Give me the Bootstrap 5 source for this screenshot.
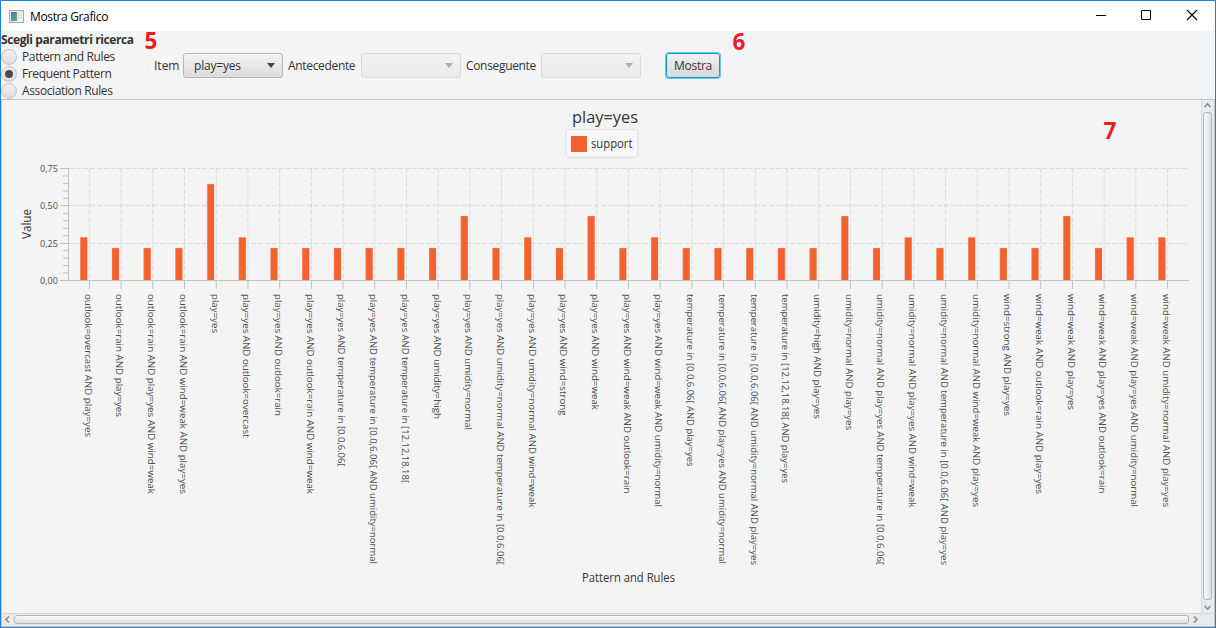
<!DOCTYPE html>
<html lang="it">
<head>
<meta charset="utf-8">
<title>Mostra Grafico</title>
<link rel="stylesheet" href="https://cdn.jsdelivr.net/npm/bootstrap@5.3.0/dist/css/bootstrap.min.css">
<script src="https://cdn.jsdelivr.net/npm/bootstrap@5.3.0/dist/js/bootstrap.bundle.min.js"></script>
<style>
body{font-family:"Open Sans","Noto Sans",sans-serif;font-size:12px;line-height:17px;color:#333;background:#f4f4f4}
.win{width:1216px;height:628px;border:1px solid #1a82d8;background:#f4f4f4}
.titlebar{height:30px;background:#fff;color:#000;padding-left:8px}
.titlebar .cap{letter-spacing:-.36px;margin-left:6px}
.winbtns{margin-right:5px}
.winbtns svg{display:block}
.params{height:68px}
.choices{width:153px}
.choices h1{font-size:12px;line-height:17px;font-weight:700;letter-spacing:-.4px}
.choice{height:17px;gap:5px;letter-spacing:-.38px}
.dot{width:16px;height:16px;border:1px solid #c3c3c3;border-radius:50%;background:linear-gradient(#f0f0f0,#dedede);flex:none}
.dot.sel::after{content:"";width:8px;height:8px;border-radius:50%;background:#4b4b4b}
.combo{width:100px;height:25px;flex:none;border:1px solid #b5b5b5;border-radius:3px;background:linear-gradient(#f3f3f3,#dcdcdc);padding:0 7px 0 10px;margin:0 5px;color:#333}
.combo span{letter-spacing:-.2px}
.combo.off{opacity:.4}
.combo i{border:4.5px solid transparent;border-top:5px solid #444;border-bottom:0}
.lbl1,.lbl2{letter-spacing:-.33px;white-space:nowrap}
.lbl1{width:68px}
.lbl2{width:70px}
.go{width:54px;height:25px;margin-left:20px;padding:0;font-size:12px;line-height:17px;letter-spacing:-.3px;color:#333;border:1px solid #039ed3;border-radius:3px;background:linear-gradient(#f0f0f0,#d9d9d9);box-shadow:0 0 0 1px #6cc4e6}
.note{position:absolute;font-weight:700;font-size:22.5px;line-height:22px;color:#ed1c24}
.pane{border:1px solid #c5c5c5;height:528px}
.plot{width:1199px;height:513px;display:block}
.vbar{width:13px;height:513px;background:#eaeaea;border-left:1px solid #d6d6d6;padding:1px 2px 1px 1px}
.hbar{height:13px;background:#eaeaea;border-top:1px solid #d6d6d6;padding:1px 14px 2px 1px}
.thumb{border:1px solid #b4b4b4;border-radius:3px}
.vbar .thumb{width:9px;margin:2px 0 3px;background:linear-gradient(90deg,#fafafa,#dedede)}
.hbar .thumb{height:9px;margin:0 2px;background:linear-gradient(#fafafa,#dedede)}
.arrow{fill:none;stroke:#8c8c8c;stroke-width:1.6}
</style>
</head>
<body>
<main class="win position-relative overflow-hidden">
  <header class="titlebar d-flex align-items-center">
    <svg width="15" height="13" viewBox="0 0 15 13"><defs><linearGradient id="ic" x2="1" y2="1"><stop stop-color="#4a78a8"/><stop offset="1" stop-color="#62ad7d"/></linearGradient></defs><rect x=".5" y=".5" width="14" height="12" fill="#f0f0f0" stroke="#a8a8a8"/><rect x="2" y="2" width="6" height="9" fill="url(#ic)"/><rect x="9" y="2" width="2" height="7" fill="#d8dde2"/><rect x="12" y="2" width="1" height="7" fill="#d8dde2"/></svg>
    <span class="cap">Mostra Grafico</span>
    <div class="winbtns d-flex ms-auto">
      <svg width="46" height="30"><path d="M12 14.500h10" stroke="#000"/></svg>
      <svg width="46" height="30"><path d="M11.500 9.500h9v9h-9z" fill="none" stroke="#000"/></svg>
      <svg width="34" height="30"><path d="M11 9l10 10M21 9L11 19" fill="none" stroke="#000" stroke-width="1.1"/></svg>
    </div>
  </header>

  <section class="params d-flex">
    <div class="choices">
      <h1 class="m-0 text-nowrap">Scegli parametri ricerca</h1>
      <div class="choice d-flex align-items-center"><span class="dot"></span>Pattern and Rules</div>
      <div class="choice d-flex align-items-center"><span class="dot sel d-flex align-items-center justify-content-center"></span>Frequent Pattern</div>
      <div class="choice d-flex align-items-center"><span class="dot"></span>Association Rules</div>
    </div>
    <div class="d-flex align-items-center">
      <span style="width:24px">Item</span>
      <div class="combo d-flex align-items-center justify-content-between"><span>play=yes</span><i></i></div>
      <span class="lbl1">Antecedente</span>
      <div class="combo off d-flex align-items-center justify-content-end"><i></i></div>
      <span class="lbl2">Conseguente</span>
      <div class="combo off d-flex align-items-center justify-content-end"><i></i></div>
      <button class="btn go">Mostra</button>
    </div>
  </section>

  <section class="pane">
    <div class="d-flex">
      <svg class="plot" id="plot" viewBox="2 100 1199 513"></svg>
      <div class="vbar d-flex flex-column align-items-center">
        <svg width="9" height="9"><path class="arrow" d="M1.500 6l3-3 3 3"/></svg>
        <div class="thumb flex-fill"></div>
        <svg width="9" height="9"><path class="arrow" d="M1.500 3l3 3 3-3"/></svg>
      </div>
    </div>
    <div class="hbar d-flex align-items-center">
      <svg width="9" height="9"><path class="arrow" d="M6 1.500l-3 3 3 3"/></svg>
      <div class="thumb flex-fill"></div>
      <svg width="9" height="9"><path class="arrow" d="M3 1.500l3 3-3 3"/></svg>
    </div>
  </section>

  <span class="note" style="left:143.500px;top:29px">5</span>
  <span class="note" style="left:731.500px;top:30px">6</span>
  <span class="note" style="left:1102.500px;top:119px">7</span>
</main>
<script>
// label, support in fourteenths, label length in px
const T='temperature in [0.0,6.06[', H='temperature in [12.12,18.18[';
const rows=[
['outlook=overcast AND play=yes',4,143],['outlook=rain AND play=yes',3,123],['outlook=rain AND play=yes AND wind=weak',3,200],
['outlook=rain AND wind=weak AND play=yes',3,200],['play=yes',9,39],['play=yes AND outlook=overcast',4,143.5],
['play=yes AND outlook=rain',3,122],['play=yes AND outlook=rain AND wind=weak',3,200],['play=yes AND '+T,3,172.5],
['play=yes AND '+T+' AND umidity=normal',3,270],['play=yes AND '+H,3,189],['play=yes AND umidity=high',3,125],
['play=yes AND umidity=normal',6,136],['play=yes AND umidity=normal AND '+T,3,271],['play=yes AND umidity=normal AND wind=weak',4,213.5],
['play=yes AND wind=strong',3,121.5],['play=yes AND wind=weak',6,116],['play=yes AND wind=weak AND outlook=rain',3,199.5],
['play=yes AND wind=weak AND umidity=normal',4,213],[T+' AND play=yes',3,172.5],[T+' AND play=yes AND umidity=normal',3,270],
[T+' AND umidity=normal AND play=yes',3,271],[H+' AND play=yes',3,189],['umidity=high AND play=yes',3,125],
['umidity=normal AND play=yes',6,136],['umidity=normal AND play=yes AND '+T,3,271],['umidity=normal AND play=yes AND wind=weak',4,213.5],
['umidity=normal AND '+T+' AND play=yes',3,271],['umidity=normal AND wind=weak AND play=yes',4,213],['wind=strong AND play=yes',3,122],
['wind=weak AND outlook=rain AND play=yes',3,200],['wind=weak AND play=yes',6,116],['wind=weak AND play=yes AND outlook=rain',3,199.5],
['wind=weak AND play=yes AND umidity=normal',4,213],['wind=weak AND umidity=normal AND play=yes',4,213]];
const text=(x,y,s,len,size,fill,extra='')=>`<text x="${x}" y="${y}" font-size="${size}" fill="${fill}" textLength="${len}" lengthAdjust="spacingAndGlyphs" ${extra}>${s}</text>`;
const y0=280.5, scale=149.3, step=31.71, x0=89.4;
let grid='',bars='',ticks='',labels='';
[.25,.5,.75].forEach(v=>grid+=`<path d="M69 ${Math.floor(y0-v*scale)+.5}H1189"/>`);
for(let i=0;i<=15;i++){const y=y0-i*scale*.05,major=i%5==0;ticks+=`<path d="M${major?60:63} ${major?Math.floor(y)+.5:y}H68"/>`}
['0,00','0,25','0,50','0,75'].forEach((s,i)=>labels+=text(40,[284,247,209,172][i],s,18,9.6,'#505050'));
rows.forEach(([s,n,len],i)=>{
  const x=x0+i*step, h=n/14*scale;
  grid+=`<path d="M${x} 168V280"/>`;
  ticks+=`<path d="M${x} 281v8"/>`;
  bars+=`<rect x="${x-9.1}" y="${y0-.5-h}" width="7" height="${h}" fill="#f3622d"/><path d="M${x-8.8} ${y0-.5}v${-h+.3}h6.700" fill="none" stroke="#f68a5f" stroke-width=".5"/>`;
  labels+=text(0,0,s,len,9.5,'#4c4c4c',`transform="translate(${x-4.7} 294) rotate(90)"`);
});
document.getElementById('plot').innerHTML=
 text(572,123,'play=yes',66,16,'#333')+
 `<rect x="566" y="129.500" width="72" height="28" rx="4" fill="#f7f7f7" stroke="#e4e4e4" stroke-width="1.5"/><rect x="571" y="136" width="16" height="16" fill="#f3622d"/>`+
 text(591,148,'support',41.5,12,'#333')+
 `<g stroke="#dcdcdc" stroke-dasharray="5 2">${grid}</g><g>${bars}</g><g stroke="#c0c0c0">${ticks}<path d="M68.500 168V281M68 280.500H1189"/></g>`+labels+
 text(0,0,'Value',30,12,'#333','transform="translate(31 239) rotate(-90)"')+
 text(582,582,'Pattern and Rules',93,12,'#333');
</script>
</body>
</html>
